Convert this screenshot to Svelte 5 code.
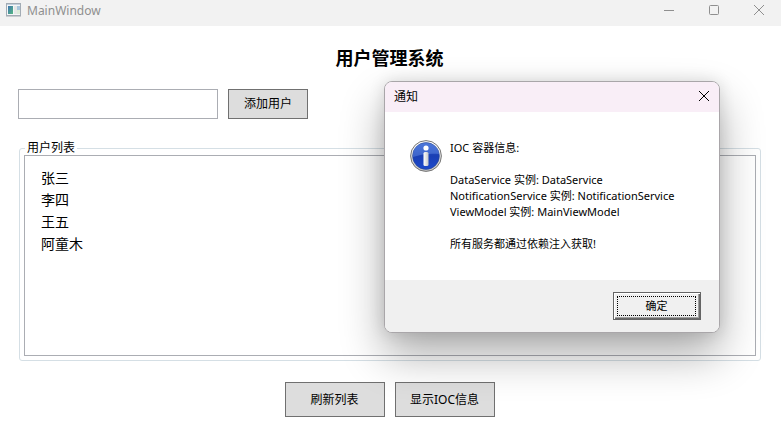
<script lang="ts">
	// Users shown in the list box
	let users = $state(['张三', '李四', '王五', '阿童木']);
	let userName = $state('');
	let showDialog = $state(true);

	// Message box lines, empty strings are blank lines
	const message = [
		'IOC 容器信息:',
		'',
		'DataService 实例: DataService',
		'NotificationService 实例: NotificationService',
		'ViewModel 实例: MainViewModel',
		'',
		'所有服务都通过依赖注入获取!'
	];

	function addUser(event: SubmitEvent) {
		event.preventDefault();
		const name = userName.trim();
		if (!name) return;
		users.push(name);
		userName = '';
	}

	function refresh() {
		users = [...users];
	}
</script>

<div class="window">
	<header class="titlebar">
		<svg class="app-icon" width="16" height="14" viewBox="0 0 16 14">
			<defs>
				<linearGradient id="pane" x1="0" y1="0" x2="1" y2="1">
					<stop offset="0" stop-color="#3f74b0" />
					<stop offset="1" stop-color="#55b982" />
				</linearGradient>
			</defs>
			<rect x="0.5" y="0.5" width="14" height="12" fill="#f4f6f7" stroke="#a3acb5" />
			<path d="M1 1.5h13" stroke="#c3d0dc" />
			<rect x="2" y="3" width="5" height="8" fill="url(#pane)" />
			<rect x="8" y="3" width="3" height="8" fill="#e4e8e6" />
			<rect x="11" y="3" width="3" height="4" fill="#a9c6dc" />
			<rect x="11" y="7" width="3" height="4" fill="#dcebd9" />
			<path d="M0 13.5h15" stroke="#c9cdd0" />
		</svg>
		<span class="caption">MainWindow</span>
		<div class="window-controls">
			<button aria-label="最小化">
				<svg width="12" height="12" viewBox="0 0 12 12"><path d="M1 6.5h10" /></svg>
			</button>
			<button aria-label="最大化">
				<svg width="12" height="12" viewBox="0 0 12 12"><rect x="1.5" y="1.5" width="9" height="9" rx="1" /></svg>
			</button>
			<button aria-label="关闭">
				<svg width="12" height="12" viewBox="0 0 12 12"><path d="M1 1l10 10M11 1L1 11" /></svg>
			</button>
		</div>
	</header>

	<main>
		<h1>用户管理系统</h1>

		<form onsubmit={addUser}>
			<input type="text" aria-label="用户名" bind:value={userName} />
			<button class="btn" type="submit">添加用户</button>
		</form>

		<fieldset>
			<legend>用户列表</legend>
			<ul>
				{#each users as user}
					<li>{user}</li>
				{/each}
			</ul>
		</fieldset>

		<div class="actions">
			<button class="btn large" onclick={refresh}>刷新列表</button>
			<button class="btn large" onclick={() => (showDialog = true)}>显示IOC信息</button>
		</div>
	</main>

	{#if showDialog}
		<div class="dialog" role="dialog" aria-labelledby="dialog-title">
			<div class="dialog-header">
				<span id="dialog-title">通知</span>
				<button aria-label="关闭" onclick={() => (showDialog = false)}>
					<svg width="12" height="12" viewBox="0 0 12 12"><path d="M1 1l10 10M11 1L1 11" /></svg>
				</button>
			</div>
			<div class="dialog-body">
				<svg width="32" height="32" viewBox="0 0 32 32">
					<defs>
						<linearGradient id="ring" x1="0" y1="0" x2="0" y2="1">
							<stop offset="0" stop-color="#ffffff" />
							<stop offset="1" stop-color="#c4c4c4" />
						</linearGradient>
						<linearGradient id="ball" x1="0" y1="0" x2="0" y2="1">
							<stop offset="0" stop-color="#3462cf" />
							<stop offset="0.5" stop-color="#1a3fb4" />
							<stop offset="1" stop-color="#1c49cc" />
						</linearGradient>
						<linearGradient id="stem" x1="0" y1="0" x2="1" y2="0">
							<stop offset="0" stop-color="#ffffff" />
							<stop offset="1" stop-color="#c8c8c8" />
						</linearGradient>
					</defs>
					<circle cx="16" cy="16" r="15.4" fill="url(#ring)" stroke="#777777" />
					<circle cx="16" cy="16" r="13.4" fill="url(#ball)" stroke="#29458f" stroke-width="0.6" />
					<path d="M3 17C2.5 8 8 3 16 3s13.500 5 13 11c-8-1-18 0-26 3z" fill="#6a93e8" opacity="0.45" />
					<circle cx="16" cy="8" r="2.6" fill="#ffffff" />
					<rect x="13.5" y="12" width="5" height="14" rx="1.5" fill="url(#stem)" />
				</svg>
				<div class="message">
					{#each message as line}
						<p>{line}</p>
					{/each}
				</div>
			</div>
			<div class="dialog-footer">
				<button class="ok" onclick={() => (showDialog = false)}><span>确定</span></button>
			</div>
		</div>
	{/if}
</div>

<style>
	:global(body) {
		margin: 0;
		background: #fff;
	}

	.window {
		position: relative;
		display: grid;
		grid-template-rows: auto 1fr;
		min-height: 100vh;
		overflow: hidden;
		font-family: 'Noto Sans', 'Noto Sans CJK SC', sans-serif;
		font-size: 12px;
		color: #000;
	}

	button,
	input {
		box-sizing: border-box;
		margin: 0;
		font: inherit;
		color: inherit;
	}

	button {
		padding: 0;
	}

	svg {
		display: block;
		flex: none;
	}

	/* Title bar */
	.titlebar {
		display: flex;
		align-items: center;
		height: 26px;
		padding-left: 6px;
		background: #f2f2f2;
		color: #8f8f8f;
	}

	.app-icon {
		margin-bottom: 6px;
	}

	.caption {
		margin: 0 auto 4px 5px;
		line-height: 16px;
	}

	.window-controls {
		display: flex;
	}

	.window-controls button {
		display: grid;
		place-items: center;
		width: 45px;
		height: 26px;
		padding-bottom: 6px;
		border: 0;
		background: none;
	}

	.window-controls svg,
	.dialog-header svg {
		fill: none;
		stroke: currentColor;
	}

	/* Main content */
	main {
		display: grid;
		grid-template-rows: auto auto 1fr auto;
		padding: 20px 20px 15px 18px;
	}

	h1 {
		margin: 0 0 19px;
		font-size: 18px;
		line-height: 24px;
		text-align: center;
	}

	form {
		display: flex;
		gap: 10px;
		margin-bottom: 22px;
	}

	input {
		width: 200px;
		height: 30px;
		padding: 0 4px;
		border: 1px solid #abadb3;
		background: #fff;
	}

	.btn {
		width: 80px;
		height: 30px;
		padding-bottom: 2px;
		border: 1px solid #707070;
		background: #ddd;
	}

	.btn.large {
		width: 100px;
		height: 35px;
	}

	fieldset {
		display: grid;
		min-width: 0;
		margin: 0 0 21px 1px;
		padding: 0 4px 4px;
		border: 1px solid #d5dfe5;
		border-radius: 3px;
	}

	legend {
		margin-left: 1px;
		padding: 0 2px;
		line-height: 14px;
	}

	ul {
		margin: 0;
		padding: 11px 16px;
		border: 1px solid #abadb3;
		list-style: none;
		font-size: 14px;
		line-height: 22px;
	}

	.actions {
		display: flex;
		justify-content: center;
		gap: 10px;
	}

	/* Message box */
	.dialog {
		position: absolute;
		top: 81px;
		right: 61px;
		width: 334px;
		overflow: hidden;
		border: 1px solid #a9a6a9;
		border-radius: 8px;
		background: #fff;
		box-shadow: 0 22px 44px rgba(0, 0, 0, 0.32), 0 0 16px rgba(0, 0, 0, 0.12);
	}

	.dialog-header {
		display: flex;
		align-items: center;
		justify-content: space-between;
		box-sizing: border-box;
		height: 30px;
		padding: 0 9px 2px;
		background: #f9eef7;
	}

	.dialog-header button {
		border: 0;
		background: none;
	}

	.dialog-body {
		display: flex;
		gap: 8px;
		padding: 28px 25px;
	}

	.message {
		font-size: 11px;
		line-height: 16px;
		white-space: nowrap;
	}

	.message p {
		min-height: 16px;
		margin: 0;
	}

	.dialog-footer {
		display: flex;
		justify-content: flex-end;
		padding: 12px 18px;
		background: #f0f0f0;
	}

	.ok {
		width: 88px;
		height: 28px;
		padding: 2px 4px 3px 3px;
		border: 1px solid #646464;
		background: #f0f0f0;
		box-shadow: inset 1px 1px #fff, inset -1px -1px #696969, inset -2px -2px #a0a0a0;
		font-size: 11px;
	}

	.ok span {
		display: block;
		border: 1px dotted #000;
		line-height: 18px;
	}
</style>
